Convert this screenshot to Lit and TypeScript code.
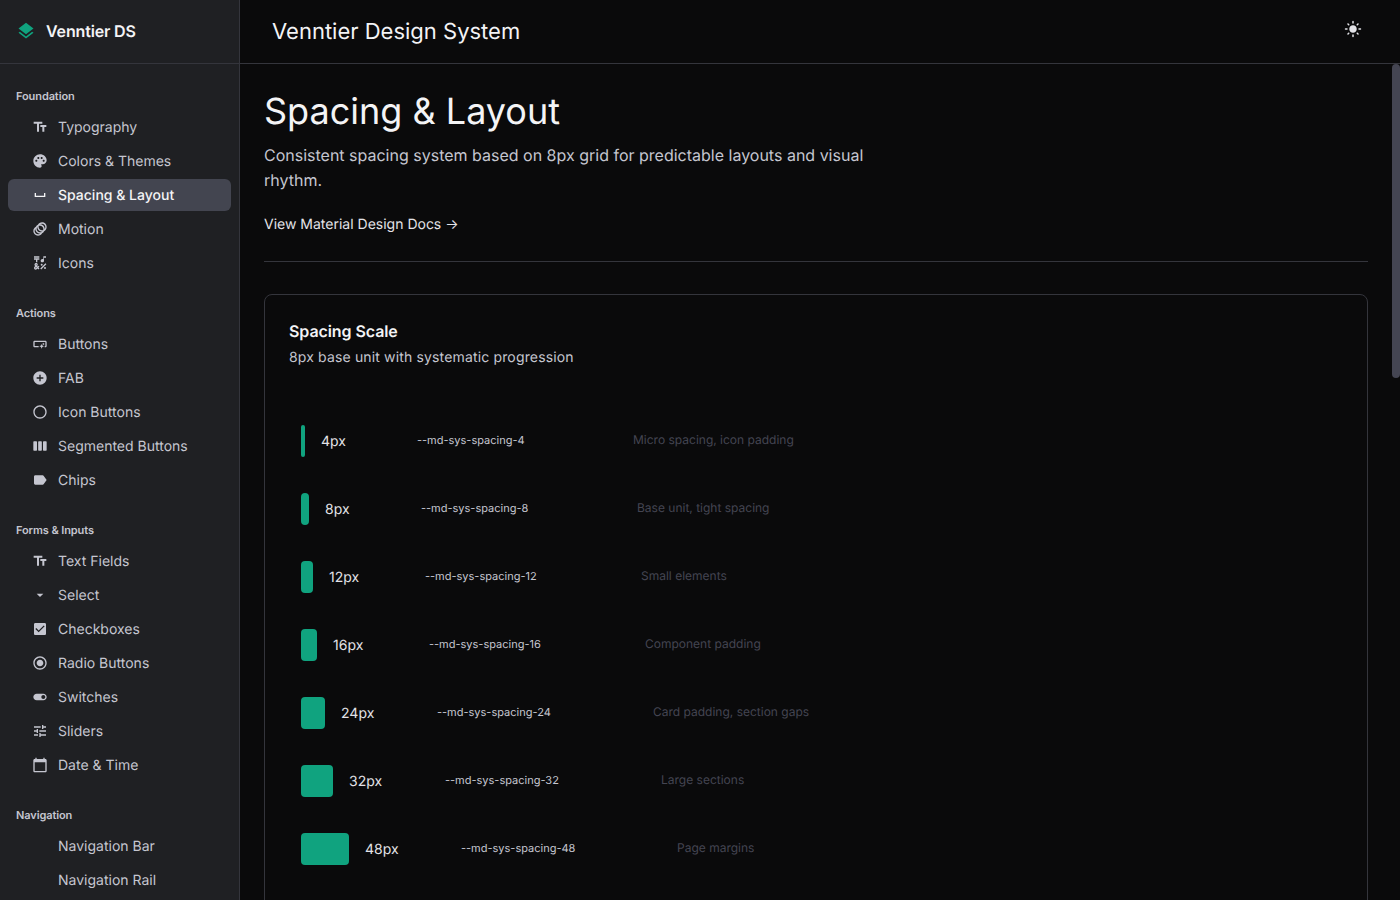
import { LitElement, html, css, svg } from 'lit'
import { customElement } from 'lit/decorators.js'

const ICONS: Record<string, unknown> = {
  title: svg`<path d="M2.5 4v3h5v12h3V7h5V4h-13zm19 5h-9v3h3v7h3v-7h3V9z"/>`,
  palette: svg`<path d="M12 2C6.49 2 2 6.49 2 12s4.49 10 10 10c1.38 0 2.5-1.12 2.5-2.5 0-.61-.23-1.2-.64-1.67-.08-.1-.13-.21-.13-.33 0-.28.22-.5.5-.5H16c3.31 0 6-2.69 6-6 0-4.96-4.49-9-10-9zm5.5 11c-.83 0-1.5-.67-1.5-1.5s.67-1.5 1.5-1.5 1.5.67 1.5 1.5-.67 1.5-1.5 1.5zm-3-4c-.83 0-1.5-.67-1.5-1.5S13.67 6 14.5 6s1.5.67 1.5 1.5S15.33 9 14.5 9zM5 11.5c0-.83.67-1.5 1.5-1.5s1.5.67 1.5 1.5S7.33 13 6.5 13 5 12.33 5 11.5zm6-4c0 .83-.67 1.5-1.5 1.5S8 8.33 8 7.5 8.67 6 9.5 6s1.5.67 1.5 1.5z"/>`,
  space: svg`<path d="M18 9v4H6V9H4v6h16V9h-2z"/>`,
  animation: svg`<path d="M15 2c-2.71 0-5.05 1.54-6.22 3.78-1.28.67-2.34 1.72-3 3C3.54 9.95 2 12.29 2 15c0 3.87 3.13 7 7 7 2.71 0 5.05-1.54 6.22-3.78 1.28-.67 2.34-1.72 3-3C20.46 14.05 22 11.71 22 9c0-3.87-3.13-7-7-7zM9 20c-2.76 0-5-2.24-5-5 0-1.12.37-2.16 1-3 0 3.87 3.13 7 7 7-.84.63-1.88 1-3 1zm3-3c-2.76 0-5-2.24-5-5 0-1.12.37-2.16 1-3 0 3.86 3.13 6.99 7 7-.84.63-1.88 1-3 1zm4.7-3.3c-.53.19-1.1.3-1.7.3-2.76 0-5-2.24-5-5 0-.6.11-1.17.3-1.7.53-.19 1.1-.3 1.7-.3 2.76 0 5 2.24 5 5 0 .6-.11 1.17-.3 1.7zM19 12c0-3.86-3.13-6.99-7-7 .84-.63 1.87-1 3-1 2.76 0 5 2.24 5 5 0 1.12-.37 2.16-1 3z"/>`,
  symbols: svg`<path d="M3 2h8v2H3zM6 11h2V7h3V5H3v2h3zM12.404 20.182l7.778-7.778 1.414 1.414-7.778 7.778z"/><circle cx="14.5" cy="14.5" r="1.5"/><circle cx="19.5" cy="19.5" r="1.5"/><path d="M15.5 11c1.38 0 2.5-1.12 2.5-2.5V4h3V2h-4v4.51C16.58 6.19 16.06 6 15.5 6 14.12 6 13 7.12 13 8.5s1.12 2.5 2.5 2.5zM9.74 15.96l-1.41 1.41-.71-.71.35-.35c.98-.98.98-2.56 0-3.54-.49-.49-1.13-.73-1.77-.73-.64 0-1.28.24-1.77.73-.98.98-.98 2.56 0 3.54l.35.35-1.06 1.06c-.98.98-.98 2.56 0 3.54.5.5 1.14.74 1.78.74s1.28-.24 1.77-.73l1.06-1.06 1.41 1.41 1.41-1.41-1.41-1.41 1.41-1.41-1.41-1.38zM5.85 14.2c.12-.12.26-.15.35-.15s.23.03.35.15c.19.2.19.51 0 .71l-.35.35-.35-.36c-.2-.19-.2-.51 0-.7zm0 5.65c-.12.12-.26.15-.35.15s-.23-.03-.35-.15c-.2-.2-.2-.51 0-.71l1.06-1.06.71.71-1.06 1.06z"/>`,
  button: svg`<path d="M22 9v6c0 1.1-.9 2-2 2h-1v-2h1V9H4v6h6v2H4c-1.1 0-2-.9-2-2V9c0-1.1.9-2 2-2h16c1.1 0 2 .9 2 2zm-7.5 10 1.09-2.41L18 15.5l-2.41-1.09L14.5 12l-1.09 2.41L11 15.5l2.41 1.09L14.5 19zm2.5-5 .62-1.38L19 12l-1.38-.62L17 10l-.62 1.38L15 12l1.38.62L17 14z"/>`,
  add: svg`<path d="M12 2C6.48 2 2 6.48 2 12s4.48 10 10 10 10-4.48 10-10S17.52 2 12 2zm5 11h-4v4h-2v-4H7v-2h4V7h2v4h4v2z"/>`,
  circle: svg`<path d="M12 2C6.47 2 2 6.47 2 12s4.47 10 10 10 10-4.47 10-10S17.53 2 12 2zm0 18c-4.41 0-8-3.59-8-8s3.59-8 8-8 8 3.59 8 8-3.59 8-8 8z"/>`,
  week: svg`<rect x="2" y="5" width="5.5" height="14" rx="1"/><rect x="9.25" y="5" width="5.5" height="14" rx="1"/><rect x="16.5" y="5" width="5.5" height="14" rx="1"/>`,
  label: svg`<path d="M17.63 5.84C17.27 5.33 16.67 5 16 5L5 5.01C3.9 5.01 3 5.9 3 7v10c0 1.1.9 1.99 2 1.99L16 19c.67 0 1.27-.33 1.63-.84L22 12l-4.37-6.16z"/>`,
  drop: svg`<path d="M7 10l5 5 5-5z"/>`,
  check: svg`<path d="M19 3H5c-1.11 0-2 .9-2 2v14c0 1.1.89 2 2 2h14c1.11 0 2-.9 2-2V5c0-1.1-.89-2-2-2zm-9 14l-5-5 1.41-1.41L10 14.17l7.59-7.59L19 8l-9 9z"/>`,
  radio: svg`<path d="M12 7c-2.76 0-5 2.24-5 5s2.24 5 5 5 5-2.24 5-5-2.24-5-5-5zm0-5C6.48 2 2 6.48 2 12s4.48 10 10 10 10-4.48 10-10S17.52 2 12 2zm0 18c-4.42 0-8-3.58-8-8s3.58-8 8-8 8 3.58 8 8-3.58 8-8 8z"/>`,
  toggle: svg`<path d="M17 7H7c-2.76 0-5 2.24-5 5s2.24 5 5 5h10c2.76 0 5-2.24 5-5s-2.24-5-5-5zm0 8c-1.66 0-3-1.34-3-3s1.34-3 3-3 3 1.34 3 3-1.34 3-3 3z"/>`,
  tune: svg`<path d="M3 17v2h6v-2H3zM3 5v2h10V5H3zm10 16v-2h8v-2h-8v-2h-2v6h2zM7 9v2H3v2h4v2h2V9H7zm14 4v-2H11v2h10zm-6-4h2V7h4V5h-4V3h-2v6z"/>`,
  calendar: svg`<path d="M20 3h-1V1h-2v2H7V1H5v2H4c-1.1 0-2 .9-2 2v16c0 1.1.9 2 2 2h16c1.1 0 2-.9 2-2V5c0-1.1-.9-2-2-2zm0 18H4V8h16v13z"/>`,
  layers: svg`<path d="M11.99 18.54l-7.37-5.73L3 14.07l9 7 9-7-1.63-1.27-7.38 5.74zM12 16l7.36-5.73L21 9l-9-7-9 7 1.63 1.27L12 16z"/>`,
  sun: svg`<path d="M12 7c-2.76 0-5 2.24-5 5s2.24 5 5 5 5-2.24 5-5-2.24-5-5-5zM2 13h2c.55 0 1-.45 1-1s-.45-1-1-1H2c-.55 0-1 .45-1 1s.45 1 1 1zm18 0h2c.55 0 1-.45 1-1s-.45-1-1-1h-2c-.55 0-1 .45-1 1s.45 1 1 1zM11 2v2c0 .55.45 1 1 1s1-.45 1-1V2c0-.55-.45-1-1-1s-1 .45-1 1zm0 18v2c0 .55.45 1 1 1s1-.45 1-1v-2c0-.55-.45-1-1-1s-1 .45-1 1zM5.99 4.58c-.39-.39-1.03-.39-1.41 0-.39.39-.39 1.03 0 1.41l1.06 1.06c.39.39 1.03.39 1.41 0s.39-1.03 0-1.41L5.99 4.58zm12.37 12.37c-.39-.39-1.03-.39-1.41 0-.39.39-.39 1.03 0 1.41l1.06 1.06c.39.39 1.03.39 1.41 0 .39-.39.39-1.03 0-1.41l-1.06-1.06zm1.06-10.96c.39-.39.39-1.03 0-1.41-.39-.39-1.03-.39-1.41 0l-1.06 1.06c-.39.39-.39 1.03 0 1.41s1.03.39 1.41 0l1.06-1.06zM7.05 18.36c.39-.39.39-1.03 0-1.41-.39-.39-1.03-.39-1.41 0l-1.06 1.06c-.39.39-.39 1.03 0 1.41s1.03.39 1.41 0l1.06-1.06z"/>`,
}

const NAV = [
  { title: 'Foundation', items: [['Typography', 'title'], ['Colors & Themes', 'palette'], ['Spacing & Layout', 'space'], ['Motion', 'animation'], ['Icons', 'symbols']] },
  { title: 'Actions', items: [['Buttons', 'button'], ['FAB', 'add'], ['Icon Buttons', 'circle'], ['Segmented Buttons', 'week'], ['Chips', 'label']] },
  { title: 'Forms & Inputs', items: [['Text Fields', 'title'], ['Select', 'drop'], ['Checkboxes', 'check'], ['Radio Buttons', 'radio'], ['Switches', 'toggle'], ['Sliders', 'tune'], ['Date & Time', 'calendar']] },
  { title: 'Navigation', items: [['Navigation Bar', ''], ['Navigation Rail', '']] },
]

const SCALE = [
  [4, 'Micro spacing, icon padding'],
  [8, 'Base unit, tight spacing'],
  [12, 'Small elements'],
  [16, 'Component padding'],
  [24, 'Card padding, section gaps'],
  [32, 'Large sections'],
  [48, 'Page margins'],
] as const

const icon = (name: string) => html`<svg class="icon" viewBox="0 0 24 24" fill="currentColor">${ICONS[name]}</svg>`

@customElement('app-root')
export class AppRoot extends LitElement {
  static styles = css`
    :host {
      display: flex;
      width: 1400px;
      height: 900px;
      overflow: hidden;
      background: #0a0a0b;
      color: #e3e3e8;
      font-family: Inter, 'Liberation Sans', sans-serif;
      text-rendering: geometricPrecision;
    }

    .sidebar {
      width: 240px;
      flex: none;
      box-sizing: border-box;
      display: flex;
      flex-direction: column;
      background: #1f2023;
      border-right: 1px solid #34353c;
    }

    .brand {
      height: 64px;
      flex: none;
      box-sizing: border-box;
      display: flex;
      align-items: center;
      gap: 10px;
      padding: 0 16px 1px;
      border-bottom: 1px solid #34353c;
      font-size: 16px;
      font-weight: 600;
      letter-spacing: -0.15px;
      color: #f4f4f6;
    }

    .brand .icon {
      width: 20px;
      height: 20px;
      color: #10a37f;
    }

    .nav {
      flex: 1;
      overflow: hidden;
      padding: 24px 8px 0;
    }

    .section {
      margin-bottom: 26px;
    }

    .section-title {
      height: 16px;
      line-height: 16px;
      padding: 0 8px;
      margin-bottom: 7px;
      font-size: 11px;
      font-weight: 600;
      letter-spacing: -0.1px;
      color: #c5c6d0;
    }

    .item {
      height: 32px;
      margin-bottom: 2px;
      box-sizing: border-box;
      display: flex;
      align-items: center;
      gap: 10px;
      padding-left: 24px;
      border-radius: 6px;
      font-size: 14px;
      line-height: 20px;
      color: #c5c6d0;
    }

    .item.active {
      background: #434550;
      color: #f4f4f6;
      font-weight: 500;
    }

    .item .icon {
      width: 16px;
      height: 16px;
      flex: none;
    }

    .item .blank {
      width: 16px;
      height: 16px;
      flex: none;
    }

    .item .text {
      margin-top: 2px;
    }

    .column {
      position: relative;
      flex: 1;
      min-width: 0;
      display: flex;
      flex-direction: column;
    }

    .topbar {
      height: 64px;
      flex: none;
      box-sizing: border-box;
      display: flex;
      align-items: center;
      justify-content: space-between;
      padding: 0 38px 0 32px;
      border-bottom: 1px solid #34353c;
      font-size: 22px;
      color: #f4f4f6;
    }

    .theme {
      width: 18px;
      height: 18px;
      margin-bottom: 6px;
      color: #e3e3e8;
    }

    .theme .icon {
      display: block;
      width: 18px;
      height: 18px;
    }

    .content {
      flex: 1;
      overflow: hidden;
      padding: 24px 32px 24px 24px;
    }

    .thumb {
      position: absolute;
      top: 64px;
      right: 0;
      width: 8px;
      height: 314px;
      background: #444552;
      border-radius: 4px;
    }

    h1 {
      margin: 0 0 9px;
      font-size: 36px;
      line-height: 46px;
      font-weight: 400;
      color: #f4f4f6;
    }

    .lead {
      margin: 0 0 22px;
      max-width: 640px;
      font-size: 16px;
      line-height: 25px;
      color: #c5c6d0;
    }

    .docs {
      display: block;
      font-size: 14px;
      line-height: 20px;
      color: #e3e3e8;
    }

    .rule {
      height: 1px;
      margin: 26px 0 32px;
      background: #34353c;
    }

    .card {
      min-height: 1400px;
      padding: 24px;
      border: 1px solid #34353c;
      border-radius: 8px;
    }

    h2 {
      margin: 0 0 5px;
      font-size: 16px;
      line-height: 24px;
      font-weight: 600;
      letter-spacing: -0.08px;
      color: #f4f4f6;
    }

    .sub {
      margin: 0 0 45px;
      font-size: 14px;
      line-height: 20px;
      letter-spacing: 0.15px;
      color: #c5c6d0;
    }

    .rows {
      display: flex;
      flex-direction: column;
      gap: 12px;
    }

    .row {
      display: flex;
      align-items: center;
      gap: 16px;
      padding: 12px;
    }

    .bar {
      height: 32px;
      flex: none;
      background: #10a37f;
      border-radius: 4px;
    }

    .size {
      width: 80px;
      flex: none;
      font-size: 14px;
      color: #e3e3e8;
    }

    .token {
      width: 200px;
      flex: none;
      margin-bottom: 2px;
      font-size: 11px;
      color: #c5c6d0;
    }

    .use {
      margin-bottom: 3px;
      font-size: 12px;
      color: #444552;
    }
  `

  render() {
    return html`
      <aside class="sidebar">
        <div class="brand">${icon('layers')}<span>Venntier DS</span></div>
        <nav class="nav">
          ${NAV.map(
            (section) => html`
              <div class="section">
                <div class="section-title">${section.title}</div>
                ${section.items.map(
                  ([label, name]) => html`
                    <div class="item ${label === 'Spacing & Layout' ? 'active' : ''}">
                      ${name ? icon(name) : html`<span class="blank"></span>`}
                      <span class="text">${label}</span>
                    </div>
                  `
                )}
              </div>
            `
          )}
        </nav>
      </aside>
      <div class="column">
        <header class="topbar">
          <span>Venntier Design System</span>
          <span class="theme">${icon('sun')}</span>
        </header>
        <main class="content">
          <h1>Spacing &amp; Layout</h1>
          <p class="lead">Consistent spacing system based on 8px grid for predictable layouts and visual rhythm.</p>
          <span class="docs">View Material Design Docs →</span>
          <div class="rule"></div>
          <section class="card">
            <h2>Spacing Scale</h2>
            <p class="sub">8px base unit with systematic progression</p>
            <div class="rows">
              ${SCALE.map(
                ([size, use]) => html`
                  <div class="row">
                    <div class="bar" style="width: ${size}px"></div>
                    <span class="size">${size}px</span>
                    <span class="token">--md-sys-spacing-${size}</span>
                    <span class="use">${use}</span>
                  </div>
                `
              )}
            </div>
          </section>
        </main>
        <div class="thumb"></div>
      </div>
    `
  }
}
